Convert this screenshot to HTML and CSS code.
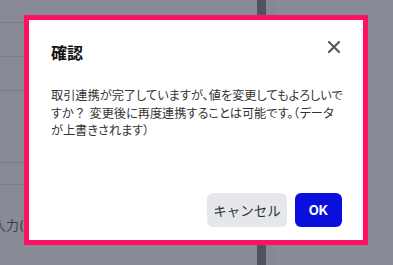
FILE: index.html
```html
<!DOCTYPE html>
<html lang="ja">
<head>
    <meta charset="UTF-8">
    <meta name="viewport" content="width=device-width, initial-scale=1.0">
    <title>確認</title>
    <link rel="stylesheet" href="styles.css">
</head>
<body>
    <div class="page">
        <div class="list">
            <div class="row row-top"></div>
            <div class="row"></div>
            <div class="row"></div>
            <div class="row row-tall"></div>
            <div class="row row-short"></div>
            <div class="field-label">入力(</div>
        </div>
        <div class="divider"></div>
        <div class="divider-light"></div>
        <div class="side"></div>
    </div>

    <!-- Confirm dialog -->
    <div class="overlay">
        <div class="dialog-frame">
            <div class="dialog">
                <div class="dialog-header">
                    <h2 class="dialog-title">確認</h2>
                    <button class="close-button" aria-label="閉じる">
                        <svg width="12" height="12" viewBox="0 0 12 12">
                            <path d="M1 1 L11 11 M11 1 L1 11" stroke="#4b5563" stroke-width="2" stroke-linecap="round"/>
                        </svg>
                    </button>
                </div>
                <p class="dialog-text">取引連携が完了していますが、値を変更してもよろしいで<br>すか<span class="fw">？</span> 変更後に再度連携することは可能です。<span class="fw">（</span>データ<br>が上書きされます）</p>
                <div class="dialog-footer">
                    <button class="btn btn-cancel">キャンセル</button>
                    <button class="btn btn-ok">OK</button>
                </div>
            </div>
        </div>
    </div>
</body>
</html>
```

FILE: styles.css
```css
* {
    margin: 0;
    padding: 0;
    box-sizing: border-box;
}

body {
    background-color: #888b95;
    font-family: Inter, "Noto Sans CJK JP", sans-serif;
    width: 393px;
    height: 265px;
    overflow: hidden;
    position: relative;
}

/* background page (dimmed) */
.page {
    display: grid;
    grid-template-columns: 257px 9px 9px 1fr;
    height: 265px;
}

.list {
    display: flex;
    flex-direction: column;
}

.row {
    height: 34px;
    border-bottom: 1px solid #7a7d88;
}

.row-top {
    height: 23px;
}

.row-tall {
    height: 72px;
}

.row-short {
    height: 22px;
}

.field-label {
    margin-top: 31px;
    margin-left: -7px;
    font-size: 13px;
    line-height: 18px;
    color: #3c3f49;
    white-space: nowrap;
}

.divider {
    background-color: #50535d;
}

.divider-light {
    background-color: #858892;
}

/* Overlay */
.overlay {
    position: absolute;
    top: 0;
    left: 0;
    width: 100%;
    height: 100%;
    padding: 15px 0 0 24px;
}

.dialog-frame {
    width: 344px;
    height: 230px;
    border: 5px solid #ff1060;
    background-color: #fff;
}

.dialog {
    height: 100%;
    display: flex;
    flex-direction: column;
    padding: 21px 14px 13px 22px;
}

.dialog-header {
    display: flex;
    justify-content: space-between;
    align-items: flex-start;
    margin-right: 7px;
}

.dialog-title {
    font-size: 16px;
    font-weight: 700;
    line-height: 24px;
    color: #111;
}

.close-button {
    width: 24px;
    height: 24px;
    margin-top: -6px;
    margin-right: -4px;
    background: none;
    border: none;
    display: flex;
    justify-content: center;
    align-items: center;
    cursor: pointer;
}

.dialog-text {
    margin-top: 22px;
    font-size: 12.2px;
    line-height: 17.5px;
    color: #333;
    font-feature-settings: "palt";
    white-space: nowrap;
}

.dialog-text .fw {
    font-feature-settings: normal;
}

.dialog-footer {
    margin-top: auto;
    margin-right: 7px;
    display: flex;
    justify-content: flex-end;
    gap: 8px;
}

.btn {
    height: 34px;
    border: none;
    border-radius: 6px;
    font-family: Inter, "Noto Sans CJK JP", sans-serif;
    font-size: 13px;
    cursor: pointer;
}

.btn-cancel {
    width: 80px;
    background-color: #e5e7eb;
    color: #2d3440;
    font-size: 13.5px;
}

.btn-ok {
    width: 47px;
    background-color: #0b0fdc;
    color: #fff;
    font-weight: 700;
}
```
